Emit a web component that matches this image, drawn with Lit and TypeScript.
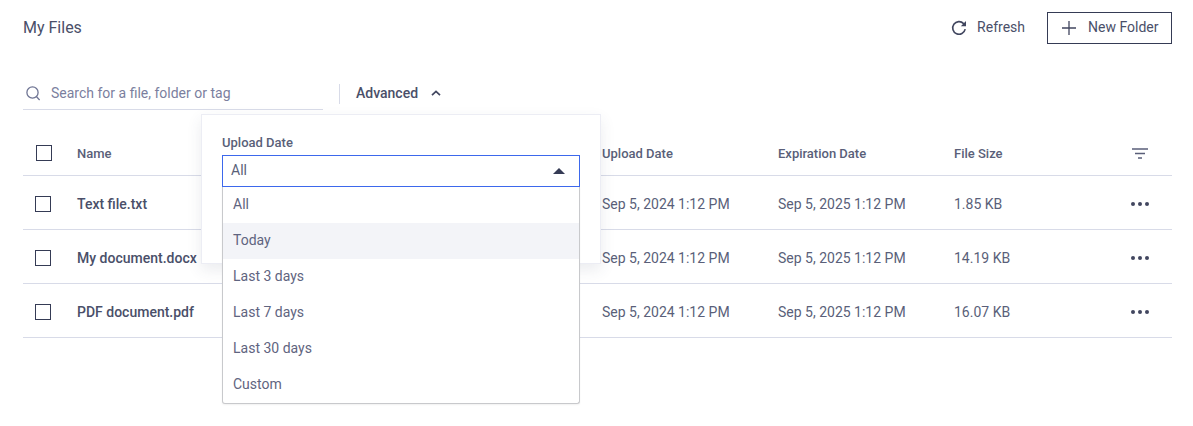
import { LitElement, html, css } from "lit";
import { customElement } from "lit/decorators.js";

const files = [
  { name: "Text file.txt", size: "1.85 KB" },
  { name: "My document.docx", size: "14.19 KB" },
  { name: "PDF document.pdf", size: "16.07 KB" },
];
const options = ["All", "Today", "Last 3 days", "Last 7 days", "Last 30 days", "Custom"];

@customElement("app-root")
export class AppRoot extends LitElement {
  static styles = css`
    :host {
      display: block;
      position: relative;
      height: 426px;
      box-sizing: border-box;
      padding: 12px 21px 0 23px;
      background: #fff;
      font-family: Roboto, "Liberation Sans", sans-serif;
      font-size: 14px;
      color: #41465f;
      overflow: hidden;
    }
    .top {
      display: flex;
      align-items: center;
      justify-content: space-between;
      height: 32px;
    }
    .title { font-size: 16px; color: #4a4f69; padding-bottom: 2px; }
    .actions { display: flex; align-items: center; }
    .refresh {
      display: flex;
      align-items: center;
      gap: 10px;
      margin-right: 22px;
      color: #4a4f69;
    }
    .refresh span, .new span { padding-bottom: 2px; }
    .new {
      display: flex;
      align-items: center;
      box-sizing: border-box;
      width: 125px;
      height: 32px;
      padding-left: 14px;
      gap: 12px;
      border: 1px solid #353b55;
      color: #4a4f69;
    }
    svg { display: block; flex: none; }
    .filters {
      display: flex;
      align-items: center;
      margin-top: 33px;
      height: 33px;
    }
    .search {
      display: flex;
      align-items: center;
      box-sizing: border-box;
      width: 300px;
      height: 33px;
      padding: 0 0 0 3px;
      gap: 11px;
      border-bottom: 1px solid #d8dbe8;
      color: #7b7f9e;
    }
    .divider { width: 1px; height: 20px; background: #d8dbe8; margin: 0 16px; }
    .advanced {
      display: flex;
      align-items: center;
      gap: 13px;
      font-weight: 500;
      color: #4a4f69;
      padding-bottom: 2px;
    }
    .row {
      display: grid;
      grid-template-columns: 54px 525px 176px 176px 176px 1fr;
      align-items: center;
      height: 54px;
      box-sizing: border-box;
      padding-top: 2px;
      border-bottom: 1px solid #d8dbe8;
      color: #5a5f79;
    }
    .head {
      margin-top: 21px;
      height: 45px;
      padding-top: 0;
      font-size: 13px;
      font-weight: 500;
      color: #5a5f79;
    }
    .name { font-weight: 500; color: #4a4f69; }
    .box {
      width: 16px;
      height: 16px;
      box-sizing: border-box;
      border: 1px solid #353b55;
      margin-left: 12px;
    }
    .head .box { margin-left: 13px; }
    .menu { justify-self: end; margin-right: 23px; }
    .head .menu { margin-right: 24px; }
    .popup {
      position: absolute;
      left: 201px;
      top: 114px;
      width: 400px;
      height: 150px;
      box-sizing: border-box;
      padding: 21px 20px 0 20px;
      background: #fff;
      border: 1px solid #ecedf4;
      box-shadow: 0 6px 14px rgba(60, 65, 100, 0.1);
    }
    .label {
      font-size: 13px;
      font-weight: 500;
      line-height: 15px;
      color: #5a5f79;
      margin-top: -1px;
    }
    .select {
      display: flex;
      align-items: center;
      justify-content: space-between;
      box-sizing: border-box;
      width: 358px;
      height: 32px;
      margin-top: 5px;
      padding: 0 14px 2px 8px;
      border: 1px solid #3d68ec;
      color: #5a5f79;
    }
    .select svg { margin-top: 2px; }
    .list {
      position: absolute;
      left: 222px;
      top: 187px;
      width: 358px;
      box-sizing: border-box;
      background: #fff;
      border: 1px solid #c8c9cc;
      border-top: 0;
      border-radius: 0 0 3px 3px;
      box-shadow: 0 1px 2px rgba(0, 0, 0, 0.06);
    }
    .opt {
      display: flex;
      align-items: center;
      height: 36px;
      box-sizing: border-box;
      padding: 0 0 2px 10px;
      color: #5f6480;
    }
    .opt.hover { background: #f3f4f8; }
  `;

  render() {
    const dots = html`<svg class="menu" width="18" height="4" viewBox="0 0 18 4" fill="#41465f">
      <circle cx="2" cy="2" r="2"></circle><circle cx="9" cy="2" r="2"></circle><circle cx="16" cy="2" r="2"></circle>
    </svg>`;
    return html`
      <div class="top">
        <div class="title">My Files</div>
        <div class="actions">
          <div class="refresh">
            <svg width="16" height="16" viewBox="0 0 16 16" fill="none">
              <path d="M14.2 9.2A6.3 6.3 0 1 1 12.6 3.6L14 5" stroke="#41465f" stroke-width="1.6"></path>
              <path d="M15 1V6.2H9.8Z" fill="#41465f"></path>
            </svg>
            <span>Refresh</span>
          </div>
          <div class="new">
            <svg width="14" height="14" viewBox="0 0 14 14" stroke="#41465f" stroke-width="1.3">
              <path d="M7 0V14M0 7H14"></path>
            </svg>
            <span>New Folder</span>
          </div>
        </div>
      </div>
      <div class="filters">
        <div class="search">
          <svg width="14" height="15" viewBox="0 0 14 15" fill="none" stroke="#6f7594" stroke-width="1.3">
            <circle cx="6.5" cy="6.5" r="5.6"></circle><path d="M10.6 10.8L13.6 14"></path>
          </svg>
          <span>Search for a file, folder or tag</span>
        </div>
        <div class="divider"></div>
        <div class="advanced">
          <span>Advanced</span>
          <svg width="10" height="6" viewBox="0 0 10 6" fill="none" stroke="#41465f" stroke-width="1.7">
            <path d="M1 5.2L5 1.4L9 5.2"></path>
          </svg>
        </div>
      </div>
      <div class="row head">
        <div class="box"></div>
        <div>Name</div>
        <div>Upload Date</div>
        <div>Expiration Date</div>
        <div>File Size</div>
        <svg class="menu" width="16" height="11" viewBox="0 0 16 11" stroke="#5a5f79" stroke-width="1.6">
          <path d="M0 1H16M3 5.5H13M6 10H10"></path>
        </svg>
      </div>
      ${files.map(
        (f) => html`<div class="row">
          <div class="box"></div>
          <div class="name">${f.name}</div>
          <div>Sep 5, 2024 1:12 PM</div>
          <div>Sep 5, 2025 1:12 PM</div>
          <div>${f.size}</div>
          ${dots}
        </div>`
      )}
      <div class="popup">
        <div class="label">Upload Date</div>
        <div class="select">
          <span>All</span>
          <svg width="12" height="6" viewBox="0 0 12 6" fill="#353b55"><path d="M6 0L12 6H0Z"></path></svg>
        </div>
      </div>
      <div class="list">
        ${options.map((o) => html`<div class="opt ${o === "Today" ? "hover" : ""}">${o}</div>`)}
      </div>
    `;
  }
}
